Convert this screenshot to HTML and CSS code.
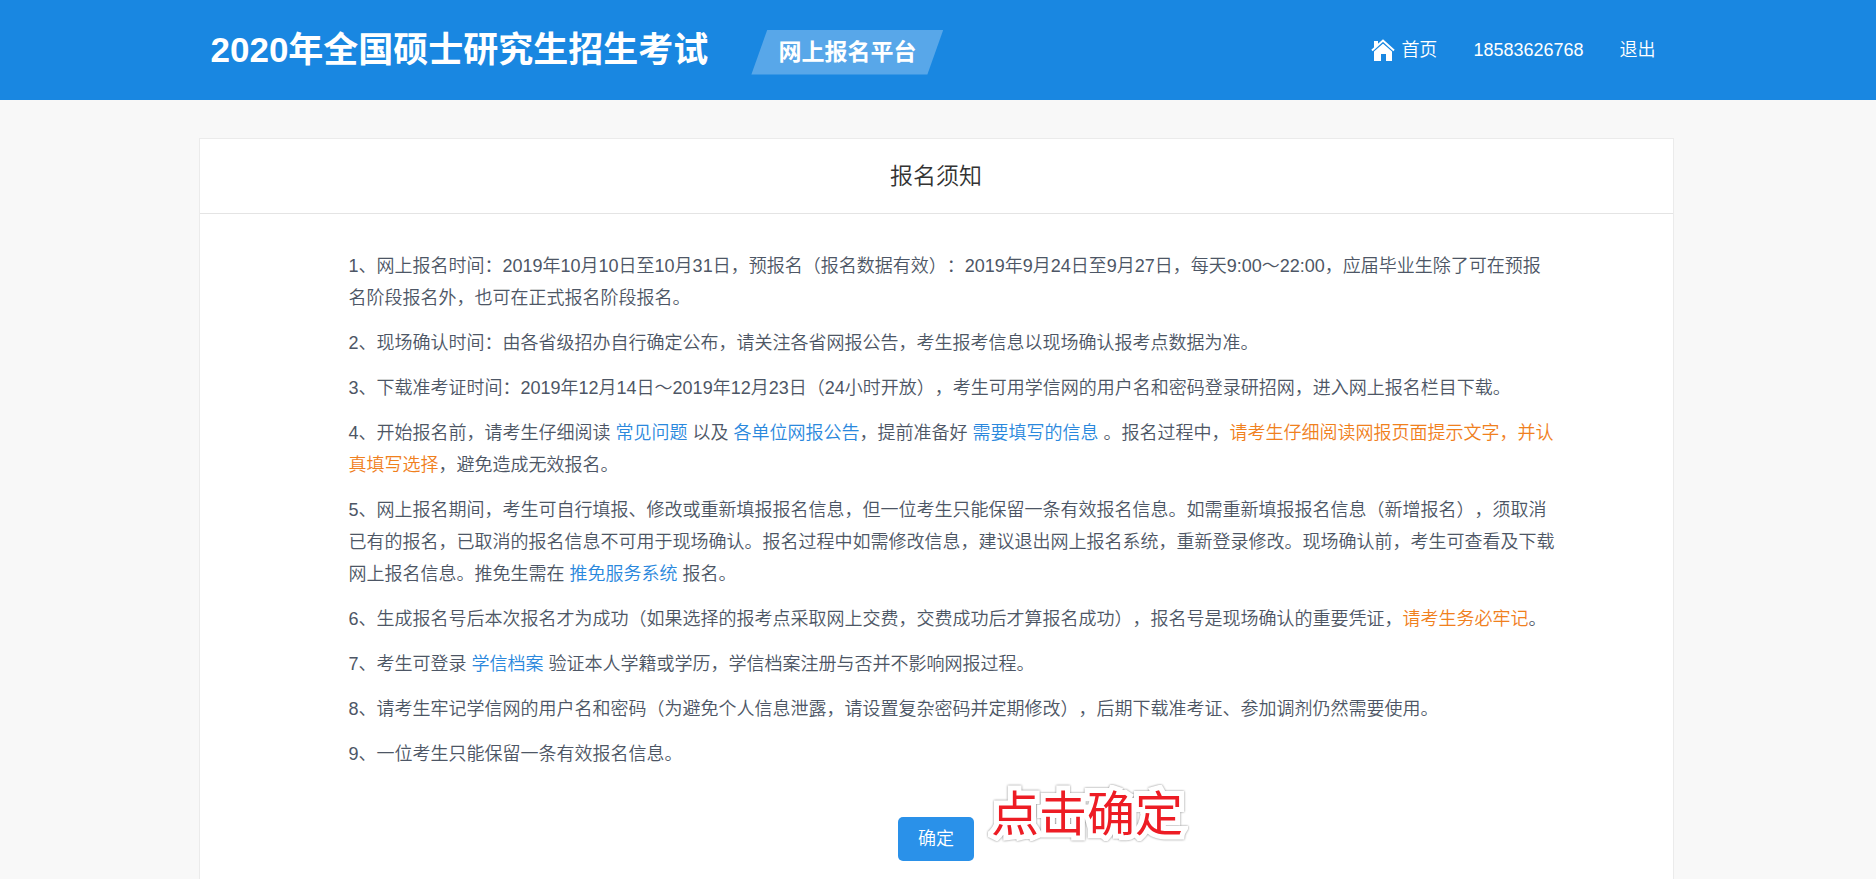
FILE: index.html
```html
<!DOCTYPE html>
<html lang="zh-CN">
<head>
<meta charset="utf-8">
<meta name="viewport" content="width=device-width, initial-scale=1">
<title>报名须知</title>
<link rel="stylesheet" href="styles.css">
</head>
<body>
<header class="header">
  <div class="header-inner">
    <h1 class="site-title">2020年全国硕士研究生招生考试</h1>
    <span class="platform">网上报名平台</span>
    <nav class="nav">
      <a class="nav-link" href="#home">
        <svg class="home-icon" viewBox="0 0 24 24" aria-hidden="true">
          <path d="M3 3h4v4L3 11z"/>
          <path d="M12 5 21 12.500V23h-6v-7H10v7H3V12.500z"/>
          <path class="roof-gap" d="M1.500 13.500 12 4.300 22.500 13.500"/>
          <path class="roof" d="M1 12.500 12 2.500 23 12.500"/>
        </svg>首页</a>
      <a class="nav-link" href="#account">18583626768</a>
      <a class="nav-link" href="#logout">退出</a>
    </nav>
  </div>
</header>
<div class="page">
<main class="card">
  <h2 class="card-title">报名须知</h2>
  <div class="notice">
    <p>1、网上报名时间：2019年10月10日至10月31日，预报名（报名数据有效）：2019年9月24日至9月27日，每天9:00～22:00，应届毕业生除了可在预报名阶段报名外，也可在正式报名阶段报名。</p>
    <p>2、现场确认时间：由各省级招办自行确定公布，请关注各省网报公告，考生报考信息以现场确认报考点数据为准。</p>
    <p>3、下载准考证时间：2019年12月14日～2019年12月23日（24小时开放），考生可用学信网的用户名和密码登录研招网，进入网上报名栏目下载。</p>
    <p>4、开始报名前，请考生仔细阅读 <a href="#faq">常见问题</a> 以及 <a href="#units">各单位网报公告</a>，提前准备好 <a href="#fields">需要填写的信息</a> 。报名过程中，<em>请考生仔细阅读网报页面提示文字，并认真填写选择</em>，避免造成无效报名。</p>
    <p>5、网上报名期间，考生可自行填报、修改或重新填报报名信息，但一位考生只能保留一条有效报名信息。如需重新填报报名信息（新增报名），须取消已有的报名，已取消的报名信息不可用于现场确认。报名过程中如需修改信息，建议退出网上报名系统，重新登录修改。现场确认前，考生可查看及下载网上报名信息。推免生需在 <a href="#tuimian">推免服务系统</a> 报名。</p>
    <p>6、生成报名号后本次报名才为成功（如果选择的报考点采取网上交费，交费成功后才算报名成功），报名号是现场确认的重要凭证，<em>请考生务必牢记</em>。</p>
    <p>7、考生可登录 <a href="#archive">学信档案</a> 验证本人学籍或学历，学信档案注册与否并不影响网报过程。</p>
    <p>8、请考生牢记学信网的用户名和密码（为避免个人信息泄露，请设置复杂密码并定期修改），后期下载准考证、参加调剂仍然需要使用。</p>
    <p>9、一位考生只能保留一条有效报名信息。</p>
  </div>
  <div class="actions">
    <div class="confirm">
      <button class="button" type="button">确定</button>
      <span class="callout">点击确定</span>
    </div>
  </div>
</main>
</div>
</body>
</html>
```
FILE: styles.css
```css
* {
  box-sizing: border-box;
}

body {
  margin: 0;
  background: #f8f8f8;
  color: #4d5665;
  font: 18px/32px "Liberation Sans", "Noto Sans CJK SC", sans-serif;
  font-weight: 350;
  text-spacing-trim: space-all;
}

a {
  color: #2a88dd;
  text-decoration: none;
}

.header {
  padding-right: 4px;
  background: #1987e1;
  color: #fff;
}

.header-inner {
  display: flex;
  align-items: center;
  max-width: 1475px;
  min-height: 100px;
  margin: 0 auto;
  padding: 0 18px 0 12px;
}

.site-title {
  margin: 0;
  font-size: 35px;
  line-height: 48px;
  font-weight: 700;
}

.platform {
  margin: 4px 0 0 43px;
  padding: 0 27px;
  background: #58a7e9;
  font-size: 23px;
  line-height: 45px;
  font-weight: 700;
  clip-path: polygon(16px 0, 100% 0, calc(100% - 16px) 100%, 0 100%);
}

.nav {
  display: flex;
  gap: 36px;
  margin-left: auto;
}

.nav-link {
  display: flex;
  align-items: center;
  gap: 6px;
  color: #fff;
}

.home-icon {
  width: 24px;
  height: 24px;
  fill: #fff;
}

.roof,
.roof-gap {
  fill: none;
  stroke: #fff;
  stroke-width: 2;
}

.roof-gap {
  stroke: #1987e1;
}

.page {
  padding-right: 4px;
}

.card {
  max-width: 1475px;
  min-height: calc(100vh - 138px);
  margin: 38px auto 0;
  background: #fff;
  border: 1px solid #ebebeb;
  border-bottom: 0;
}

.card-title {
  margin: 0;
  padding: 21px 0;
  border-bottom: 1px solid #e4e4e4;
  color: #333;
  font-size: 23px;
  font-weight: 350;
  text-align: center;
}

.notice {
  max-width: 1358px;
  padding: 36px 0 0 149px;
}

.notice p {
  margin: 0 0 13px;
}

.notice em {
  color: #f0801d;
  font-style: normal;
}

.actions {
  display: flex;
  justify-content: center;
  padding: 34px 0 12px;
}

.confirm {
  position: relative;
}

.button {
  display: block;
  padding: 6px 20px;
  border: 0;
  border-radius: 5px;
  background: #2a91e9;
  color: #fff;
  font: inherit;
}

.callout {
  position: absolute;
  left: 93px;
  bottom: 14px;
  color: #ed1c24;
  font-size: 48px;
  line-height: 64px;
  font-weight: 400;
  white-space: nowrap;
  -webkit-text-stroke: 10px #fff;
  paint-order: stroke fill;
  filter: drop-shadow(0 0 1px #888);
}
```
